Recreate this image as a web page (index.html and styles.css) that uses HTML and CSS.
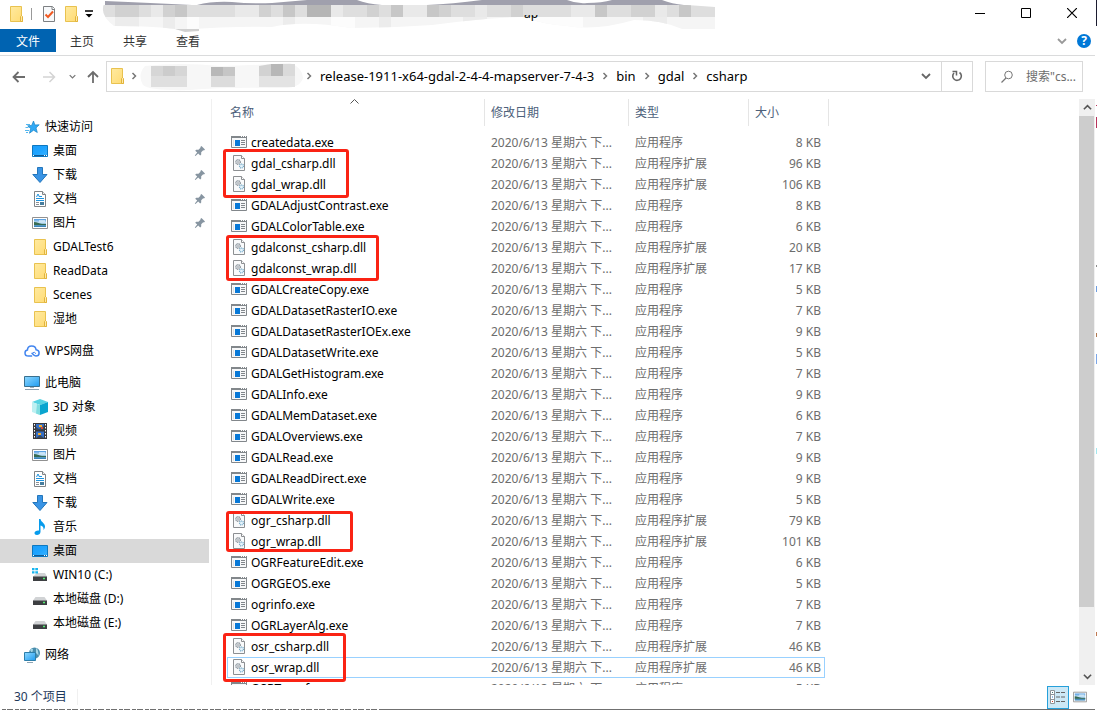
FILE: index.html
```html
<!DOCTYPE html>
<html lang="zh-CN">
<head>
<meta charset="utf-8">
<title>csharp</title>
<link rel="stylesheet" href="styles.css">
</head>
<body>
<svg class="defs" aria-hidden="true">
  <defs>
    <linearGradient id="gFolder" x1="0" y1="0" x2="1" y2="1"><stop offset="0" stop-color="#ffeaa0"/><stop offset="1" stop-color="#ffdb73"/></linearGradient>
    <linearGradient id="gDesk" x1="0" y1="0" x2="1" y2="1"><stop offset="0" stop-color="#1c9dfa"/><stop offset=".5" stop-color="#1ea4ff"/><stop offset="1" stop-color="#3db3ff"/></linearGradient>
    <linearGradient id="gPic" x1="0" y1="0" x2="0" y2="1"><stop offset="0" stop-color="#4a97e0"/><stop offset=".5" stop-color="#d6ecf8"/><stop offset=".6" stop-color="#7fb2cf"/><stop offset="1" stop-color="#2f7db5"/></linearGradient>
    <linearGradient id="gPc" x1="0" y1="0" x2="1" y2="1"><stop offset="0" stop-color="#8fd8ff"/><stop offset="1" stop-color="#1f9cf0"/></linearGradient>
  </defs>
  <symbol id="folder" viewBox="0 0 16 16"><path d="M2.5.5h11v10l1 1v4h-12z" fill="url(#gFolder)" stroke="#e9c24f"/><path d="M12.5 15v-4.500l1-1 1 1v5h-2z" fill="#ffe9a6" stroke="#e2b43c"/></symbol>
  <symbol id="check" viewBox="0 0 16 16"><path d="M2.500.5h9l2 2v13h-11z" fill="#f7f9fb" stroke="#7d8083"/><path d="M11 .5v3h3" fill="#fff" stroke="#7d8083"/><path d="M4.500 8.500l2.500 2.500 5-5.500" fill="none" stroke="#f05a23" stroke-width="2"/></symbol>
  <symbol id="star" viewBox="0 0 16 16"><path d="M9.500 2l1.400 4 4.300-.2-3.200 3.100 1.300 4.600-3.700-2.300-4.100 3 1.200-4.700L3.700 6.800l4-.4z" fill="#31a9f5" stroke="#1983c4" stroke-width=".7"/><path d="M2 5.500h4M1.500 8.500h3M1 11.500h4M2 13.500h2" stroke="#53b7ef"/></symbol>
  <symbol id="desktop" viewBox="0 0 16 16"><path d="M.5 2.500h15v11H.5z" fill="url(#gDesk)" stroke="#0d78c0"/><path d="M1 12.500h14" stroke="#125b94"/><path d="M1 12.500h1M12 12.500h1M14 12.500h1" stroke="#fff"/></symbol>
  <symbol id="download" viewBox="0 0 16 16"><path d="M5.500.5h5v7h4.500L8 15.500.8 7.500h4.700z" fill="#3994e5" stroke="#2376bb"/></symbol>
  <symbol id="document" viewBox="0 0 16 16"><path d="M2.500.5h8l3 3v12h-11z" fill="#fff" stroke="#808487"/><path d="M10.500.5v3h3" fill="#eee" stroke="#808487"/><path d="M4 7.500h8M7 5.500h3M4 9.500h8" stroke="#2094df"/><path d="M4.500 6l1.500-3 1.500 3" fill="none" stroke="#2094df"/><path d="M4 11.500h3M4 13.500h3" stroke="#8b9095"/><path d="M8 11h4v3H8z" fill="#477d9d"/></symbol>
  <symbol id="picture" viewBox="0 0 16 16"><path d="M.5 2.500h15v11H.5z" fill="#fff" stroke="#919191"/><path d="M2 4h12v8H2z" fill="url(#gPic)"/><path d="M2 7c3 0 5 1.500 8 2h4v1H2z" fill="#376b53"/><path d="M7 5h6v2H7z" fill="#dff0fa" opacity=".7"/></symbol>
  <symbol id="cloud" viewBox="0 0 16 16"><path d="M4.500 13C2.300 13 1 11.700 1 9.900c0-1.600 1.100-2.600 2.400-2.800C3.500 4.500 5.300 3 7.700 3c2.300 0 4.100 1.500 4.400 3.800 1.800.2 3 1.400 3 3.100 0 1.800-1.200 3.100-3.200 3.100-2.200 0-2.700-1.500-4.200-3.300M4.500 13h3.700" fill="none" stroke="#4285ef" stroke-width="1.500"/><path d="M9 9.700c1.300-.8 2.500-.2 2.600 1" fill="none" stroke="#4285ef"/></symbol>
  <symbol id="pc" viewBox="0 0 16 16"><path d="M.5 1.500h15v10H.5z" fill="url(#gPc)" stroke="#39708f"/><path d="M6 12.500h4" stroke="#a0b0bb"/><path d="M1 14.500h14" stroke="#8da1b0"/></symbol>
  <symbol id="cube" viewBox="0 0 16 16"><path d="M8 0l8 3-8 3-8-3z" fill="#56d3e2"/><path d="M0 3l8 3v10l-8-3z" fill="#bdf0f2"/><path d="M16 3L8 6v10l8-3z" fill="#0aa5cf"/><path d="M5 5l3 1v10l-4-1.500z" fill="#7fdde0"/></symbol>
  <symbol id="video" viewBox="0 0 16 16"><path d="M1 0h14v16H1z" fill="#39393c"/><path d="M4 1h8v6H4zM4 8.500h8v6.500H4z" fill="#356fc6"/><path d="M4 4l3 2 5-3v4H4zM4 15l4-3 4 3z" fill="#37485d"/><path d="M7 2h3v2H7zM6 10h3v2H6z" fill="#f4ae2c"/><path d="M9 4h2v2H9z" fill="#d44a32"/><path d="M2.500 1v15M13.500 1v15" stroke="#fff" stroke-dasharray="1.500"/></symbol>
  <symbol id="music" viewBox="0 0 16 16"><path d="M7 0h1.500c.3 3 4.500 4 4.500 7.500 0 1.500-.7 2.700-1.500 3.500.5-2.500-.8-4-3-4.500v6.300C8.500 15 6.600 16 5 16s-2.500-.8-2.500-2C2.500 12.300 5 11 7 11.500z" fill="#069bec"/></symbol>
  <symbol id="drive" viewBox="0 0 16 16"><path d="M3.500 6h9L15 9.500H1z" fill="#d1d3d5"/><path d="M1 9h14v5H1z" fill="#3d3f42"/><path d="M1 9.500h14" stroke="#87898c"/><path d="M11 11.500h2" stroke="#55ef73" stroke-width="1.500"/></symbol>
  <symbol id="windrive" viewBox="0 0 16 16"><path d="M5 6h8l2 3.500H1z" fill="#d1d3d5"/><path d="M1 9h14v5H1z" fill="#3d3f42"/><path d="M1 9.500h14" stroke="#87898c"/><path d="M11 11.500h2" stroke="#55ef73" stroke-width="1.500"/><path d="M0 1h2.500v2.300H0zM3.300 1H6v2.300H3.300zM0 4.200h2.500v2.300H0zM3.300 4.200H6v2.300H3.300z" fill="#18b5ef"/></symbol>
  <symbol id="network" viewBox="0 0 16 16"><circle cx="10.500" cy="6" r="5.500" fill="#4a8dac"/><path d="M6 3c2-2 3-1 3 0L8 6zM12 1c3 2 2 6 3 8l-3-3z" fill="#a5d6e7"/><path d="M.5 5.500h11v8H.5z" fill="url(#gPc)" stroke="#2c7eaa"/><path d="M3 15.500h6" stroke="#8fa5b4"/></symbol>
  <symbol id="pin" viewBox="0 0 12 12"><path d="M7.500 1l3.500 3.500-1 1-.8-.2-2 2v2.200l-1 1-2-2L1.500 11l-.7-.5 2.400-2.900-2-1.800 1-1h2.300l2-2.100-.2-.8z" fill="#8795a1"/></symbol>
  <symbol id="exe" viewBox="0 0 16 16"><path d="M.5 2.500h15v11H.5z" fill="#f7f8f9" stroke="#82878b"/><path d="M0 3h16" stroke="#82878b" stroke-width="2"/><path d="M10 2.500h1M12 2.500h1M14 2.500h1" stroke="#fff"/><path d="M4 6h5v6H4z" fill="#0778d7"/><path d="M2 6h1v6H2z" fill="#dfe2e4"/><path d="M10 6.500h4M10 8.500h4M10 10.500h4" stroke="#81868b"/></symbol>
  <symbol id="dll" viewBox="0 0 16 16"><path d="M2.500.5h8l3 3v12h-11z" fill="#f9fafb" stroke="#8c8f92"/><path d="M10.500.5v3h3" fill="#fff" stroke="#8c8f92"/><circle cx="7" cy="7" r="2.400" fill="#e4e8eb" stroke="#8d969d" stroke-dasharray="1 .6" stroke-width="1.200"/><circle cx="7" cy="7" r="1.200" fill="none" stroke="#9ca4aa" stroke-width=".7"/><circle cx="10.500" cy="11" r="2" fill="#e5f3fb" stroke="#75aac8" stroke-dasharray="1 .6" stroke-width="1.200"/></symbol>
  <symbol id="crumb" viewBox="0 0 8 10"><path d="M2.500 2l3 3-3 3" fill="none" stroke="#777" stroke-width="1.500"/></symbol>
  <symbol id="down" viewBox="0 0 10 10"><path d="M1 3l4 4 4-4" fill="none" stroke="currentColor" stroke-width="1.800"/></symbol>
</svg>
<div class="screen">
<div class="window">
  <header class="titlebar">
    <div class="quick">
      <svg class="icon"><use href="#folder"/></svg>
      <span class="quick-sep"></span>
      <button class="plain" aria-label="属性"><svg class="icon"><use href="#check"/></svg></button>
      <button class="plain" aria-label="新建文件夹"><svg class="icon"><use href="#folder"/></svg></button>
      <button class="plain" aria-label="自定义"><svg width="8" height="8" viewBox="0 0 8 8"><path d="M0 1h8" stroke="#000" stroke-width="1.500"/><path d="M.5 4h7L4 7.500z"/></svg></button>
    </div>
    <svg class="title-mosaic" viewBox="0 0 615 32" aria-hidden="true">
      <defs><clipPath id="cm"><path d="M3 2Q14 4 40 5H585L613 7V29H580Q560 20 532 20Q495 31 465 26Q440 24 420 17Q380 18 330 25Q290 28 250 28Q200 20 170 27Q130 26 80 30Q55 26 12 26Q-4 14 3 2z"/></clipPath><clipPath id="cl"><path d="M418 15h24v8h-24z"/></clipPath></defs>
      <path d="M3 1Q50 3 90 5H3zM95 5Q110 1 130 2Q150 4 170 3L205 0H255Q265 4 280 5zM325 5Q350 4 380 0H465Q475 4 485 3Q500 3 510 0H560Q570 4 582 5z" fill="#a0a0ad"/>
      <g clip-path="url(#cm)">
        <path d="M0 5h615v12H0z" fill="#dedede"/><path d="M0 17h615v15H0z" fill="#f5f5f5"/>
        <path d="M13 5h24v12H13zM61 5h12v12H61zM157 5h12v12h-12zM265 5h12v12h-12zM337 5h12v12h-12zM409 5h12v12h-12zM529 5h24v12h-24z" fill="#d1d1d1"/>
        <path d="M73 5h12v12H73zM181 5h12v12h-12zM289 5h12v12h-12zM325 5h12v12h-12zM493 5h12v12h-12zM577 5h12v12h-12z" fill="#c7c7c7"/>
        <path d="M205 5h24v12h-24z" fill="#b5b5b5"/>
        <path d="M49 5h12v12H49zM133 5h24v12h-24zM229 5h12v12h-12zM301 5h24v12h-24zM373 5h12v12h-12zM469 5h24v12h-24zM553 5h12v12h-12z" fill="#e9e9e9"/>
        <path d="M13 17h24v14H13zM61 17h12v14H61zM181 17h12v14h-12zM277 17h12v14h-12zM361 17h24v14h-24zM541 17h24v14h-24z" fill="#ececec"/>
        <path d="M85 17h12v14H85zM229 17h24v14h-24zM421 17h60v14h-60z" fill="#fcfcfc"/>
      </g>
      <g clip-path="url(#cl)"><text x="422" y="18" class="title-rest">ap</text></g>
      <path d="M73 29h24v2l-14 1z" fill="#d0d0d0"/>
    </svg>
    <div class="controls">
      <button class="plain" aria-label="最小化"><svg width="10" height="10"><path d="M0 5.500h10" stroke="#000"/></svg></button>
      <button class="plain" aria-label="最大化"><svg width="10" height="10"><path d="M.5.5h9v9h-9z" fill="none" stroke="#000"/></svg></button>
      <button class="plain" aria-label="关闭"><svg width="10" height="10"><path d="M0 0l10 10M10 0L0 10" stroke="#000" stroke-width="1.200"/></svg></button>
    </div>
  </header>
  <nav class="ribbon">
    <button class="tab file">文件</button>
    <button class="tab">主页</button>
    <button class="tab">共享</button>
    <button class="tab">查看</button>
    <span class="grow"></span>
    <button class="plain expand" aria-label="展开功能区"><svg width="10" height="10"><use href="#down"/></svg></button>
    <button class="help" aria-label="帮助">?</button>
  </nav>
  <div class="navbar">
    <div class="arrows">
      <button class="plain" aria-label="后退"><svg width="14" height="12" viewBox="0 0 14 12"><path d="M13 6H2M6.500 1L1.500 6l5 5" fill="none" stroke="#6d6d6d" stroke-width="1.800"/></svg></button>
      <button class="plain" aria-label="前进"><svg width="14" height="12" viewBox="0 0 14 12"><path d="M1 6h11M7.500 1l5 5-5 5" fill="none" stroke="#d4d4d4" stroke-width="1.500"/></svg></button>
      <button class="plain recent" aria-label="最近"><svg width="7" height="7"><use href="#down"/></svg></button>
      <button class="plain" aria-label="向上"><svg width="12" height="14" viewBox="0 0 12 14"><path d="M6 13V2M1 7l5-5 5 5" fill="none" stroke="#6d6d6d" stroke-width="1.800"/></svg></button>
    </div>
    <div class="address">
      <svg class="icon"><use href="#folder"/></svg>
      <svg class="crumb"><use href="#crumb"/></svg>
      <svg class="path-mosaic" viewBox="0 0 164 30" aria-hidden="true">
        <path d="M5 5Q40 1 80 5Q120 4 150 2Q163 7 163 17Q160 28 140 27Q80 26 50 29Q10 30 3 24Q-3 14 5 5z" fill="#f7f7f7"/>
        <path d="M11 5h36v10H11z" fill="#d6d6d6"/><path d="M23 5h12v10H23z" fill="#ccc"/><path d="M11 15h36v11H11z" fill="#dfdfdf"/>
        <path d="M71 6h12v9H71z" fill="#b8b8b8"/><path d="M83 6h12v9H83z" fill="#c6c6c6"/><path d="M71 15h24v11H71z" fill="#dcdcdc"/>
        <path d="M119 5l12-2v12h-12z" fill="#d2d2d2"/><path d="M131 3h12v12h-12z" fill="#b7b7b7"/><path d="M143 3h12v12h-12z" fill="#dadada"/><path d="M119 15h36v11h-36z" fill="#e3e3e3"/>
      </svg>
      <svg class="crumb"><use href="#crumb"/></svg>
      <a href="#">release-1911-x64-gdal-2-4-4-mapserver-7-4-3</a>
      <svg class="crumb"><use href="#crumb"/></svg>
      <a href="#">bin</a>
      <svg class="crumb"><use href="#crumb"/></svg>
      <a href="#">gdal</a>
      <svg class="crumb"><use href="#crumb"/></svg>
      <a href="#">csharp</a>
      <span class="grow"></span>
      <button class="plain history" aria-label="以前的位置"><svg width="10" height="10"><use href="#down"/></svg></button>
      <button class="plain refresh" aria-label="刷新"><svg width="12" height="12" viewBox="0 0 12 12"><path d="M8.500 2.500A4.300 4.300 0 1 1 3 3" fill="none" stroke="#666" stroke-width="1.600"/><path d="M1.500 1.500h4v4" fill="none" stroke="#666" stroke-width="1.500"/></svg></button>
    </div>
    <label class="search">
      <svg width="14" height="14" viewBox="0 0 14 14"><circle cx="8.500" cy="5" r="3.800" fill="none" stroke="#777"/><path d="M6 8l-4.500 4.500" stroke="#777" stroke-width="1.200"/></svg>
      <input type="text" aria-label="搜索" placeholder='搜索"cs...'>
    </label>
  </div>
  <main class="content">
    <nav class="sidebar">
      <a class="item root" href="#"><svg class="icon"><use href="#star"/></svg>快速访问</a>
      <a class="item" href="#"><svg class="icon"><use href="#desktop"/></svg>桌面<svg class="pin"><use href="#pin"/></svg></a>
      <a class="item" href="#"><svg class="icon"><use href="#download"/></svg>下载<svg class="pin"><use href="#pin"/></svg></a>
      <a class="item" href="#"><svg class="icon"><use href="#document"/></svg>文档<svg class="pin"><use href="#pin"/></svg></a>
      <a class="item" href="#"><svg class="icon"><use href="#picture"/></svg>图片<svg class="pin"><use href="#pin"/></svg></a>
      <a class="item" href="#"><svg class="icon"><use href="#folder"/></svg>GDALTest6</a>
      <a class="item" href="#"><svg class="icon"><use href="#folder"/></svg>ReadData</a>
      <a class="item" href="#"><svg class="icon"><use href="#folder"/></svg>Scenes</a>
      <a class="item" href="#"><svg class="icon"><use href="#folder"/></svg>湿地</a>
      <a class="item root" href="#"><svg class="icon"><use href="#cloud"/></svg>WPS网盘</a>
      <a class="item root" href="#"><svg class="icon"><use href="#pc"/></svg>此电脑</a>
      <a class="item" href="#"><svg class="icon"><use href="#cube"/></svg>3D 对象</a>
      <a class="item" href="#"><svg class="icon"><use href="#video"/></svg>视频</a>
      <a class="item" href="#"><svg class="icon"><use href="#picture"/></svg>图片</a>
      <a class="item" href="#"><svg class="icon"><use href="#document"/></svg>文档</a>
      <a class="item" href="#"><svg class="icon"><use href="#download"/></svg>下载</a>
      <a class="item" href="#"><svg class="icon"><use href="#music"/></svg>音乐</a>
      <a class="item selected" href="#"><svg class="icon"><use href="#desktop"/></svg>桌面</a>
      <a class="item" href="#"><svg class="icon"><use href="#windrive"/></svg>WIN10 (C:)</a>
      <a class="item" href="#"><svg class="icon"><use href="#drive"/></svg>本地磁盘 (D:)</a>
      <a class="item" href="#"><svg class="icon"><use href="#drive"/></svg>本地磁盘 (E:)</a>
      <a class="item root" href="#"><svg class="icon"><use href="#network"/></svg>网络</a>
    </nav>
    <section class="files">
      <table>
        <colgroup><col class="c-name"><col class="c-date"><col class="c-type"><col class="c-size"><col class="c-end"></colgroup>
        <thead><tr><th>名称<svg class="sort" viewBox="0 0 9 5"><path d="M.5 4.500l4-4 4 4" fill="none" stroke="#555"/></svg></th><th>修改日期</th><th>类型</th><th>大小</th><th></th></tr></thead>
        <tbody>
          <tr><td><svg class="icon"><use href="#exe"/></svg>createdata.exe</td><td>2020/6/13 星期六 下...</td><td>应用程序</td><td>8 KB</td></tr>
          <tr><td><svg class="icon"><use href="#dll"/></svg>gdal_csharp.dll<span class="mark mark-gdal"></span></td><td>2020/6/13 星期六 下...</td><td>应用程序扩展</td><td>96 KB</td></tr>
          <tr><td><svg class="icon"><use href="#dll"/></svg>gdal_wrap.dll</td><td>2020/6/13 星期六 下...</td><td>应用程序扩展</td><td>106 KB</td></tr>
          <tr><td><svg class="icon"><use href="#exe"/></svg>GDALAdjustContrast.exe</td><td>2020/6/13 星期六 下...</td><td>应用程序</td><td>8 KB</td></tr>
          <tr><td><svg class="icon"><use href="#exe"/></svg>GDALColorTable.exe</td><td>2020/6/13 星期六 下...</td><td>应用程序</td><td>6 KB</td></tr>
          <tr><td><svg class="icon"><use href="#dll"/></svg>gdalconst_csharp.dll<span class="mark mark-const"></span></td><td>2020/6/13 星期六 下...</td><td>应用程序扩展</td><td>20 KB</td></tr>
          <tr><td><svg class="icon"><use href="#dll"/></svg>gdalconst_wrap.dll</td><td>2020/6/13 星期六 下...</td><td>应用程序扩展</td><td>17 KB</td></tr>
          <tr><td><svg class="icon"><use href="#exe"/></svg>GDALCreateCopy.exe</td><td>2020/6/13 星期六 下...</td><td>应用程序</td><td>5 KB</td></tr>
          <tr><td><svg class="icon"><use href="#exe"/></svg>GDALDatasetRasterIO.exe</td><td>2020/6/13 星期六 下...</td><td>应用程序</td><td>7 KB</td></tr>
          <tr><td><svg class="icon"><use href="#exe"/></svg>GDALDatasetRasterIOEx.exe</td><td>2020/6/13 星期六 下...</td><td>应用程序</td><td>9 KB</td></tr>
          <tr><td><svg class="icon"><use href="#exe"/></svg>GDALDatasetWrite.exe</td><td>2020/6/13 星期六 下...</td><td>应用程序</td><td>5 KB</td></tr>
          <tr><td><svg class="icon"><use href="#exe"/></svg>GDALGetHistogram.exe</td><td>2020/6/13 星期六 下...</td><td>应用程序</td><td>7 KB</td></tr>
          <tr><td><svg class="icon"><use href="#exe"/></svg>GDALInfo.exe</td><td>2020/6/13 星期六 下...</td><td>应用程序</td><td>9 KB</td></tr>
          <tr><td><svg class="icon"><use href="#exe"/></svg>GDALMemDataset.exe</td><td>2020/6/13 星期六 下...</td><td>应用程序</td><td>6 KB</td></tr>
          <tr><td><svg class="icon"><use href="#exe"/></svg>GDALOverviews.exe</td><td>2020/6/13 星期六 下...</td><td>应用程序</td><td>7 KB</td></tr>
          <tr><td><svg class="icon"><use href="#exe"/></svg>GDALRead.exe</td><td>2020/6/13 星期六 下...</td><td>应用程序</td><td>9 KB</td></tr>
          <tr><td><svg class="icon"><use href="#exe"/></svg>GDALReadDirect.exe</td><td>2020/6/13 星期六 下...</td><td>应用程序</td><td>9 KB</td></tr>
          <tr><td><svg class="icon"><use href="#exe"/></svg>GDALWrite.exe</td><td>2020/6/13 星期六 下...</td><td>应用程序</td><td>5 KB</td></tr>
          <tr><td><svg class="icon"><use href="#dll"/></svg>ogr_csharp.dll<span class="mark mark-ogr"></span></td><td>2020/6/13 星期六 下...</td><td>应用程序扩展</td><td>79 KB</td></tr>
          <tr><td><svg class="icon"><use href="#dll"/></svg>ogr_wrap.dll</td><td>2020/6/13 星期六 下...</td><td>应用程序扩展</td><td>101 KB</td></tr>
          <tr><td><svg class="icon"><use href="#exe"/></svg>OGRFeatureEdit.exe</td><td>2020/6/13 星期六 下...</td><td>应用程序</td><td>6 KB</td></tr>
          <tr><td><svg class="icon"><use href="#exe"/></svg>OGRGEOS.exe</td><td>2020/6/13 星期六 下...</td><td>应用程序</td><td>5 KB</td></tr>
          <tr><td><svg class="icon"><use href="#exe"/></svg>ogrinfo.exe</td><td>2020/6/13 星期六 下...</td><td>应用程序</td><td>7 KB</td></tr>
          <tr><td><svg class="icon"><use href="#exe"/></svg>OGRLayerAlg.exe</td><td>2020/6/13 星期六 下...</td><td>应用程序</td><td>7 KB</td></tr>
          <tr><td><svg class="icon"><use href="#dll"/></svg>osr_csharp.dll<span class="mark mark-osr"></span></td><td>2020/6/13 星期六 下...</td><td>应用程序扩展</td><td>46 KB</td></tr>
          <tr class="focused"><td><svg class="icon"><use href="#dll"/></svg>osr_wrap.dll</td><td>2020/6/13 星期六 下...</td><td>应用程序扩展</td><td>46 KB</td></tr>
          <tr><td><svg class="icon"><use href="#exe"/></svg>OSRTransform.exe</td><td>2020/6/13 星期六 下...</td><td>应用程序</td><td>5 KB</td></tr>
        </tbody>
      </table>
    </section>
    <div class="scrollbar">
      <button class="plain" aria-label="向上滚动"><svg class="flip" width="9" height="9"><use href="#down"/></svg></button>
      <div class="track"><div class="thumb"></div></div>
      <button class="plain" aria-label="向下滚动"><svg width="9" height="9"><use href="#down"/></svg></button>
    </div>
  </main>
  <footer class="status">
    <span class="count">30 个项目</span>
    <span class="grow"></span>
    <button class="view active" aria-label="详细信息"><svg width="16" height="14" viewBox="0 0 16 14"><path d="M.5.5h4v13h-4zM.5 4.500h4M.5 9.500h4" fill="#fff" stroke="#8d9499"/><path d="M6 2.500h4M11 2.500h4M6 7h4M11 7h4M6 11.500h4M11 11.500h4" stroke="#666"/><path d="M2 2h1v1H2z" fill="#477"/><path d="M2 6.500h1v1H2z" fill="#2179d1"/><path d="M2 11h1v1H2z" fill="#d43524"/></svg></button>
    <button class="view" aria-label="大缩略图"><svg width="14" height="14"><use href="#picture"/></svg></button>
  </footer>
</div>
<div class="behind" aria-hidden="true"></div>
</div>
</body>
</html>
```
FILE: styles.css
```css
* { box-sizing: border-box; }
body {
  margin: 0;
  background: #fff;
  color: #000;
  font: 12px/16px "Noto Sans", "Noto Sans CJK SC", sans-serif;
}
a { color: inherit; text-decoration: none; }
svg { flex: none; }
.defs { position: absolute; width: 0; height: 0; }
.icon { width: 16px; height: 16px; }
.grow { flex: 1; }
button { font: inherit; padding: 0; }
.plain {
  display: flex;
  align-items: center;
  justify-content: center;
  background: none;
  border: 0;
}
.screen { display: flex; height: 100vh; overflow: hidden; }
.window {
  flex: 1;
  min-width: 0;
  display: flex;
  flex-direction: column;
}
.window::after {
  content: "";
  height: 1px;
  background: repeating-linear-gradient(90deg, #fff 0 2px, transparent 2px 6px, #fff 6px 7px, transparent 7px 13px) 0 0 / 380px 1px no-repeat #707070;
}
.behind {
  width: 2px;
  border-left: 1px solid #fff;
  background: linear-gradient(#1c1c30 0 26px, #fff 26px 105px, #b8325a 105px 106px, #fff 106px 117px, #b8325a 117px 128px, #fff 128px 265px, #8c8c8c 265px 267px, #fff 267px 286px, #6e9de0 286px 292px, #fff 292px 333px, #b07850 333px 337px, #fff 337px 354px, #7ba6e8 354px 364px, #fff 364px 448px, #a3e8ef 448px 454px, #fff 454px 632px, #c07850 632px 636px, #fff 636px);
}

/* title bar */
.titlebar { display: flex; height: 29px; }
.quick { display: flex; align-items: center; width: 102px; padding: 0 0 2px 8px; gap: 6px; flex: none; }
.quick-sep { width: 1px; height: 12px; background: #999; margin: 0 3px 0 1px; }
.title-mosaic { width: 615px; height: 32px; flex: 0 1 615px; }
.title-rest { font-size: 12px; }
.controls { display: flex; margin-left: auto; }
.controls .plain { width: 46px; height: 26px; }

/* ribbon */
.ribbon { display: flex; align-items: center; height: 27px; padding-bottom: 3px; border-bottom: 1px solid #dadbdc; }
.tab { height: 23px; padding: 2px 14px 0; margin-right: 1px; border: 0; background: none; color: #333; }
.tab.file { width: 56px; margin-right: 0; background: #0063b1; color: #fff; }
.expand { color: #999; margin-right: 10px; }
.help { width: 14px; height: 14px; margin-right: 4px; border: 0; border-radius: 50%; background: #0078d7; color: #fff; font-weight: bold; line-height: 14px; }

/* navigation and address */
.navbar { display: flex; align-items: center; padding: 5px 12px 7px 12px; }
.arrows { display: flex; align-items: center; gap: 16px; width: 94px; color: #777; }
.arrows .plain { color: #777; }
.arrows .recent { margin: 0 -5px 0 -3px; }
.address { display: flex; align-items: center; flex: 1; height: 31px; border: 1px solid #d9d9d9; padding: 0 0 1px 2px; font-size: 13px; }
.crumb { width: 8px; height: 10px; margin: 0 7px; }
.address .icon { margin-right: -2px; }
.path-mosaic { width: 164px; height: 30px; margin: 0 -6px 0 -5px; }
.history { width: 30px; }
.address .history { color: #666; }
.refresh { width: 31px; height: 29px; border-left: 1px solid #d9d9d9; }
.search { display: flex; align-items: center; gap: 12px; width: 98px; height: 31px; margin-left: 12px; padding-left: 14px; border: 1px solid #d9d9d9; }
.search input { min-width: 0; width: 56px; padding: 0; border: 0; outline: 0; background: none; font: inherit; }
.search input::placeholder { color: #6d6d6d; opacity: 1; }

/* folder tree */
.content { display: flex; flex: 1; min-height: 0; }
.sidebar { display: flex; flex-direction: column; width: 212px; padding: 16px 2px 0 0; border-right: 1px solid #f0f0f0; flex: none; }
.item { display: flex; align-items: center; gap: 5px; height: 24px; padding-left: 32px; flex: none; }
.item.root { padding-left: 24px; }
.item + .root { margin-top: 8px; }
.item.selected { background: #d9d9d9; }
.pin { width: 12px; height: 12px; margin-left: auto; margin-right: 3px; }

/* file list */
.files { flex: 1; min-width: 0; overflow: hidden; padding-left: 15px; }
table { border-collapse: separate; border-spacing: 0; table-layout: fixed; width: 602px; }
.c-name { width: 258px; }
.c-date { width: 144px; }
.c-type { width: 120px; }
.c-size { width: 76px; }
.c-end { width: 4px; }
th { position: relative; height: 27px; padding: 0 0 0 6px; border-right: 1px solid #e5e5e5; color: #4c607a; font-weight: normal; text-align: left; }
th:first-child { padding-left: 3px; }
th:nth-child(4) { border-right: 0; }
thead::after { content: ""; display: block; height: 6px; }
.sort { position: absolute; left: 123px; top: 0; width: 9px; height: 5px; }
td { height: 21px; padding: 0 0 0 6px; color: #6d6d6d; white-space: nowrap; }
td:first-child { position: relative; padding-left: 4px; color: #000; }
td:nth-child(4) { padding: 0 4px 0 0; text-align: right; }
td .icon { margin-right: 4px; vertical-align: -3px; }
.focused td { border: solid #99d1ff; border-width: 1px 0; }
.focused td:first-child { border-left-width: 1px; padding-left: 3px; }
.focused td:last-child { border-right-width: 1px; padding-right: 3px; }
.mark { position: absolute; z-index: 1; border: 3px solid #fa2314; border-radius: 3px; }
.mark-gdal { left: -4px; top: -4px; width: 126px; height: 49px; }
.mark-const { left: -1px; top: -2px; width: 153px; height: 46px; }
.mark-ogr { left: -1px; top: 1px; width: 127px; height: 41px; }
.mark-osr { left: -4px; top: -3px; width: 123px; height: 49px; }

/* scroll bar */
.scrollbar { display: flex; flex-direction: column; width: 16px; background: #f0f0f0; }
.scrollbar .plain { height: 17px; color: #555; }
.track { flex: 1; padding-right: 1px; }
.thumb { height: 89%; background: #cdcdcd; }
.flip { transform: rotate(180deg); }

/* status bar */
.status { display: flex; align-items: center; height: 24px; padding: 0 4px 0 14px; color: #1e395b; }
.count { padding-right: 10px; border-right: 1px solid #f0f0f0; }
.view { display: flex; align-items: center; justify-content: center; width: 22px; height: 23px; border: 1px solid transparent; background: none; }
.view.active { border-color: #26a0da; background: #cce8f6; }
```
